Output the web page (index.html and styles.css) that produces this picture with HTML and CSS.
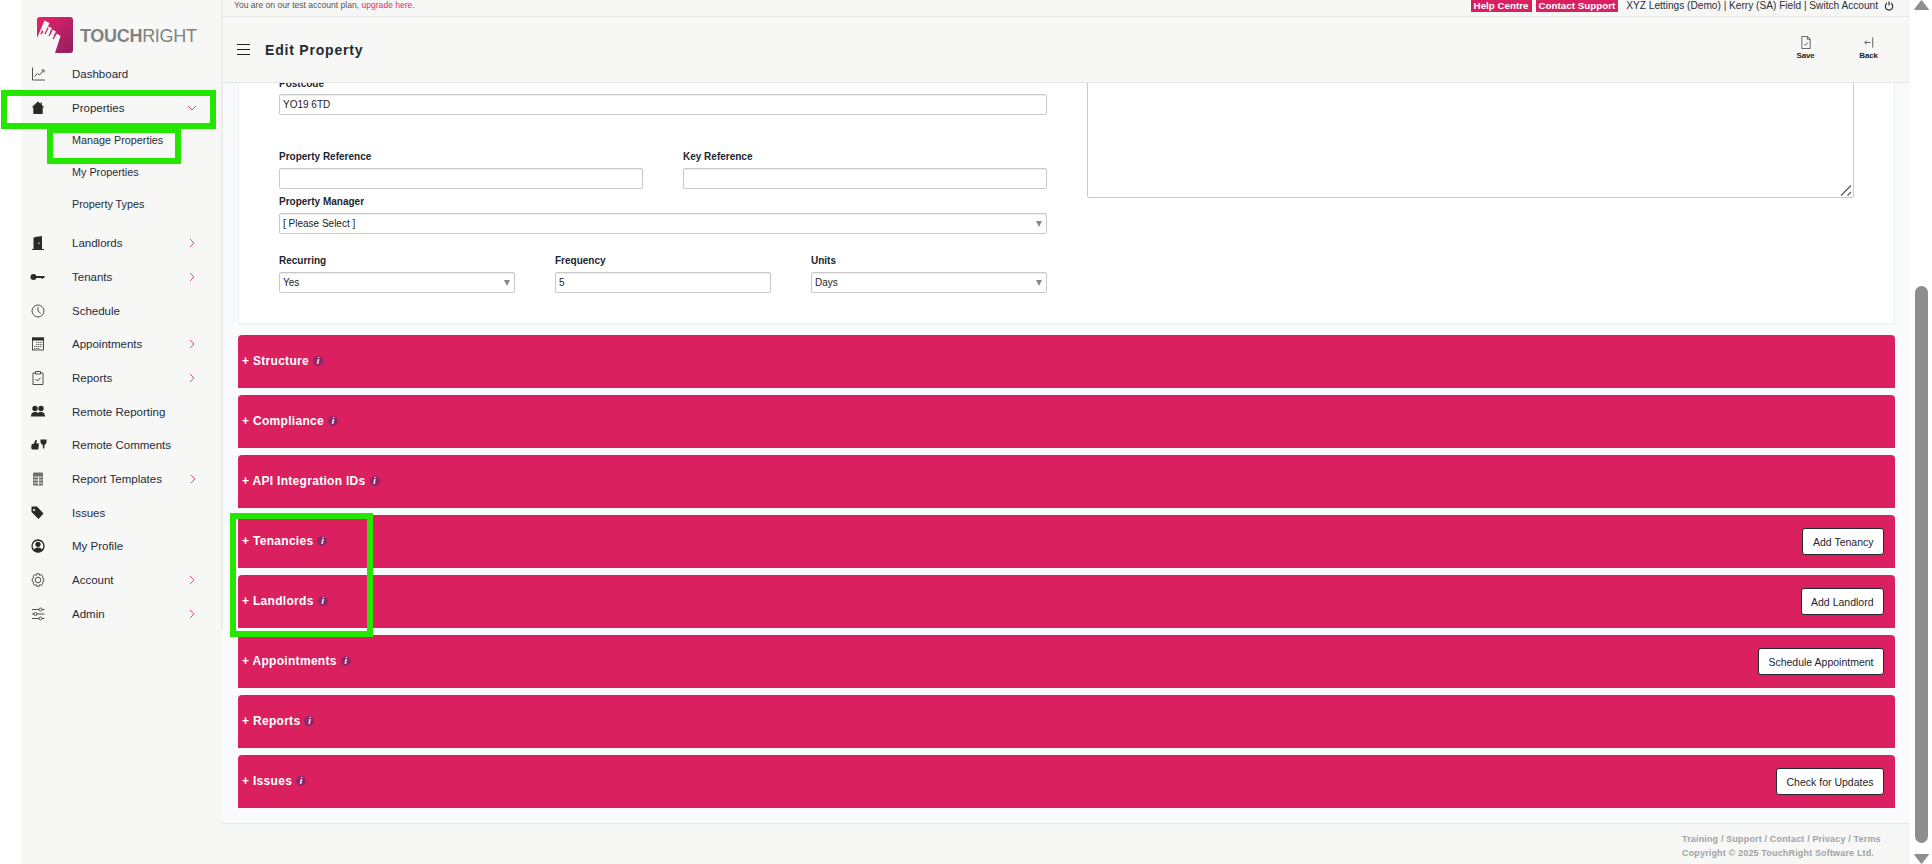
FILE: index.html
```html
<!DOCTYPE html>
<html lang="en">
<head>
<meta charset="utf-8">
<title>Edit Property</title>
<link rel="stylesheet" href="styles.css">
</head>
<body>
<div class="app">
  <div class="gutter"></div>
  <aside class="sidebar">
    <div class="side-inner">
      <div class="logo">
        <svg class="logo-mark" viewBox="0 0 36 36">
          <defs><linearGradient id="lg" x1="0" y1="0" x2="1" y2="1"><stop offset="0" stop-color="#ee2067"/><stop offset="1" stop-color="#8f1f5f"/></linearGradient></defs>
          <rect width="36" height="36" rx="3" fill="url(#lg)"/>
          <path fill="#f7f7f5" d="M0 21 L7.500 3.500 L12.500 6 L8.500 15 L11.500 9.500 L15 11 L12.500 16 L15.500 12.500 L19 14.500 L16.500 19 L20 16.500 L23.500 19 L18 36 L0 36 Z"/>
          <path fill="none" stroke="url(#lg)" stroke-width="1.300" d="M11 11 L8 17 M15 13 L12 19 M19.500 16 L16 22"/>
          <path fill="url(#lg)" d="M3 18 L5 13 L6.500 15 Z"/>
        </svg>
        <span class="logo-text"><b>TOUCH</b>RIGHT</span>
      </div>
      <nav class="nav">
        <a class="item"><svg class="ico" viewBox="0 0 16 14"><path class="ln" d="M2.500 .5V13H15M4.500 9.500L7.500 6.500 9.500 8 13.500 3.500M11.500 3H14V5.500"/></svg>Dashboard</a>
        <a class="item"><svg class="ico" viewBox="0 0 16 14"><path class="fl" d="M8 .5L3 5 2 6.500 3.300 6.500V13H12.700V6.500L14 6.500 13 5 11.800 3.900V1.500H10.500V2.700Z"/></svg>Properties<svg class="chev" viewBox="0 0 10 10"><path d="M1 3l4 4 4-4"/></svg></a>
        <div class="sub">
          <a class="sub-item">Manage Properties</a>
          <a class="sub-item">My Properties</a>
          <a class="sub-item">Property Types</a>
        </div>
        <a class="item"><svg class="ico" viewBox="0 0 16 14"><path class="fl" d="M3.500 2L5 1 12 0V13H14V14H2V13H3.500ZM8.500 6.500V8H9.500V6.500Z" fill-rule="evenodd"/></svg>Landlords<svg class="chev right" viewBox="0 0 10 10"><path d="M3 1l4 4-4 4"/></svg></a>
        <a class="item"><svg class="ico" viewBox="0 0 16 14"><circle class="fl" cx="3.500" cy="7" r="3"/><path class="fl" d="M5 6H14.500V8H13V8.800H11.500V8H5Z"/></svg>Tenants<svg class="chev right" viewBox="0 0 10 10"><path d="M3 1l4 4-4 4"/></svg></a>
        <a class="item"><svg class="ico" viewBox="0 0 16 14"><circle class="ln" cx="8" cy="7" r="6"/><path class="ln" d="M8 3V7L10.800 9.500"/></svg>Schedule</a>
        <a class="item"><svg class="ico" viewBox="0 0 16 14"><rect class="ln" x="2.500" y="1" width="11" height="12"/><rect class="fl" x="2" y=".5" width="12" height="3"/><path class="dots" d="M6 5.500H12.500M6 7.500H12.500M4 9.500H12.500M4 11.500H10"/></svg>Appointments<svg class="chev right" viewBox="0 0 10 10"><path d="M3 1l4 4-4 4"/></svg></a>
        <a class="item"><svg class="ico" viewBox="0 0 16 14"><path class="ln" d="M5.500 2H3V13.500H13V2H10.500M5.500 .5H10.500V3H5.500ZM5.500 8L7.500 10 10.500 6.500"/></svg>Reports<svg class="chev right" viewBox="0 0 10 10"><path d="M3 1l4 4-4 4"/></svg></a>
        <a class="item"><svg class="ico" viewBox="0 0 16 14"><circle class="fl" cx="5" cy="3.500" r="2.700"/><circle class="fl" cx="11" cy="3.500" r="2.700"/><path class="fl" d="M1 11.500C1 8 3 7 5 7S7.500 7.500 8 8C8.500 7.500 9 7 11 7S15 8 15 11.500Z"/></svg>Remote Reporting</a>
        <a class="item"><svg class="ico wide" viewBox="0 0 18 14"><path class="fl" d="M1.500 7C2 6 3 6 3.800 5.800L5.500 2H6.800L6.500 5.500H9L8.300 11.500H2.500C1.500 11.500 1 10 1.500 7Z"/><path class="fl" d="M10.500 1.500H16.500C17 4 16 6.500 14.500 6.800L14.300 10.500H13L12.700 6.800C11 6.500 10 4 10.500 1.500Z"/></svg>Remote Comments</a>
        <a class="item"><svg class="ico" viewBox="0 0 16 14"><rect class="grey" x="3" y=".5" width="10" height="13" rx="1"/><path class="cut" d="M3.500 5H12.500M3.500 8H12.500M3.500 11H12.500M8.500 5V13"/></svg>Report Templates<svg class="chev right" viewBox="0 0 10 10"><path d="M3 1l4 4-4 4"/></svg></a>
        <a class="item"><svg class="ico" viewBox="0 0 16 14"><path class="fl" d="M1.500 .5H7L13.500 7.500 8.500 13 1.500 6ZM4 3a1 1 0 1 0 .01 0Z" fill-rule="evenodd"/></svg>Issues</a>
        <a class="item"><svg class="ico" viewBox="0 0 16 14"><circle class="ln1" cx="8" cy="7" r="6"/><circle class="fl" cx="8" cy="5.300" r="2.600"/><path class="fl" d="M3.500 11.500C4 9.500 6 8.500 8 8.500S12 9.500 12.500 11.500C11 13 9 13.200 8 13.200S5 13 3.500 11.500Z"/></svg>My Profile</a>
        <a class="item"><svg class="ico" viewBox="0 0 16 14"><path class="ln" d="M6.800 .7H9.200L9.700 2.300 11.300 1.700 13 3.300 12.300 4.800 13.800 5.800V8.200L12.300 9.200 13 10.700 11.300 12.300 9.700 11.700 9.200 13.300H6.800L6.300 11.700 4.700 12.300 3 10.700 3.700 9.200 2.200 8.200V5.800L3.700 4.800 3 3.300 4.700 1.700 6.300 2.300Z"/><circle class="ln" cx="8" cy="7" r="2.800"/></svg>Account<svg class="chev right" viewBox="0 0 10 10"><path d="M3 1l4 4-4 4"/></svg></a>
        <a class="item"><svg class="ico" viewBox="0 0 16 14"><path class="ln" d="M2 2.500H9M12 2.500H14.500M2 7H4M7 7H14.500M2 11.500H9M12 11.500H14.500"/><circle class="ln" cx="10.500" cy="2.500" r="1.500"/><circle class="ln" cx="5.500" cy="7" r="1.500"/><circle class="ln" cx="10.500" cy="11.500" r="1.500"/></svg>Admin<svg class="chev right" viewBox="0 0 10 10"><path d="M3 1l4 4-4 4"/></svg></a>
      </nav>
    </div>
  </aside>

  <div class="main">
    <div class="strip">
      <p class="plan">You are on our test account plan, <a class="pink">upgrade here.</a></p>
      <div class="strip-right">
        <a class="badge">Help Centre</a>
        <a class="badge">Contact Support</a>
        <span class="account">XYZ Lettings (Demo) | Kerry (SA) Field | Switch Account</span>
        <svg class="power" viewBox="0 0 10 10"><path d="M3 2.300A3.700 3.700 0 1 0 7 2.300M5 .5V4.500"/></svg>
      </div>
    </div>
    <header class="header">
      <div class="burger"><span></span><span></span><span></span></div>
      <h1 class="title">Edit Property</h1>
      <div class="tools">
        <a class="tool"><svg class="tool-ico" viewBox="0 0 12 14"><path d="M1.500 .5H7.500L10.500 3.500V13.500H1.500ZM7.500 .5V3.500H10.500M4 8.500L5.500 10 8 7"/></svg>Save</a>
        <a class="tool"><svg class="tool-ico" viewBox="0 0 12 14"><path d="M10 1.500V12.500M1.500 7H7.500M3.500 5L1.500 7 3.500 9"/></svg>Back</a>
      </div>
    </header>
    <main class="content">
      <section class="card">
        <div class="form">
          <div class="col">
            <div class="field postcode">
              <label class="lbl">Postcode</label>
              <input class="ctl" value="YO19 6TD">
            </div>
            <div class="row refs">
              <div class="field"><label class="lbl">Property Reference</label><input class="ctl"></div>
              <div class="field"><label class="lbl">Key Reference</label><input class="ctl"></div>
            </div>
            <div class="field manager">
              <label class="lbl">Property Manager</label>
              <div class="sel"><select class="ctl pick"><option>[ Please Select ]</option></select></div>
            </div>
            <div class="recur">
              <div class="field"><label class="lbl">Recurring</label><div class="sel"><select class="ctl pick"><option>Yes</option></select></div></div>
              <div class="field"><label class="lbl">Frequency</label><input class="ctl" value="5"></div>
              <div class="field"><label class="lbl">Units</label><div class="sel"><select class="ctl pick"><option>Days</option></select></div></div>
            </div>
          </div>
          <div class="col">
            <div class="notes-wrap">
              <textarea class="notes"></textarea>
              <svg class="grip" viewBox="0 0 12 12"><path d="M1 11.500L11 1.500M7.500 11.500L11 8"/></svg>
            </div>
          </div>
        </div>
      </section>
      <div class="panels">
        <div class="panel"><span class="ptitle">+ Structure</span><i class="info">i</i></div>
        <div class="panel"><span class="ptitle">+ Compliance</span><i class="info">i</i></div>
        <div class="panel"><span class="ptitle">+ API Integration IDs</span><i class="info">i</i></div>
        <div class="panel"><span class="ptitle">+ Tenancies</span><i class="info">i</i><button class="btn">Add Tenancy</button></div>
        <div class="panel"><span class="ptitle">+ Landlords</span><i class="info">i</i><button class="btn">Add Landlord</button></div>
        <div class="panel"><span class="ptitle">+ Appointments</span><i class="info">i</i><button class="btn">Schedule Appointment</button></div>
        <div class="panel"><span class="ptitle">+ Reports</span><i class="info">i</i></div>
        <div class="panel"><span class="ptitle">+ Issues</span><i class="info">i</i><button class="btn">Check for Updates</button></div>
      </div>
    </main>
    <footer class="footer">
      <p>Training / Support / Contact / Privacy / Terms</p>
      <p>Copyright © 2025 TouchRight Software Ltd.</p>
    </footer>
  </div>

  <div class="scrollbar">
    <svg class="arrow" viewBox="0 0 15 10"><path d="M7.500 .5L14.500 9.500H.5Z"/></svg>
    <div class="thumb"></div>
    <svg class="arrow down" viewBox="0 0 15 10"><path d="M.5 .5H14.500L7.500 9.500Z"/></svg>
  </div>
</div>

<div class="mark mark-props"></div>
<div class="mark mark-manage"></div>
<div class="mark mark-panels"></div>
</body>
</html>
```

FILE: styles.css
```css
* { box-sizing: border-box; }
html, body { margin: 0; height: 864px; overflow: hidden; background: #fff; }
body { font-family: "Liberation Sans", Arial, sans-serif; color: #212529; position: relative; }
p, h1 { margin: 0; }
a { color: inherit; text-decoration: none; }

.app { display: flex; height: 864px; width: 1932px; }
.gutter { width: 21px; flex: none; background: #fff; }

/* sidebar */
.sidebar { width: 202px; flex: none; background: #f7f7f5; }
.side-inner { height: 630px; border-right: 2px solid #ececea; }
.logo { height: 57px; display: flex; padding: 17px 0 0 16px; gap: 7px; }
.logo-mark { width: 36px; height: 36px; flex: none; }
.logo-text { font: 400 18px/1 "Liberation Sans", sans-serif; color: #808285; margin-top: 10px; letter-spacing: -.3px; }
.logo-text b { font-weight: 700; }

.nav { display: flex; flex-direction: column; }
.item { height: 33.7px; display: flex; align-items: center; gap: 26px; padding: 0 24px 0 9px; font-size: 11.5px; color: #1f2b3a; white-space: nowrap; }
.ico { width: 16px; height: 14px; flex: none; overflow: visible; }
.ico .ln { fill: none; stroke: #3c3c3c; stroke-width: .9; }
.ico .ln1 { fill: none; stroke: #222; stroke-width: 1.3; }
.ico .fl { fill: #2a2a2a; }
.ico .dots { fill: none; stroke: #666; stroke-width: 1; stroke-dasharray: 1.400 .6; }
.ico .grey { fill: #6f6f6f; }
.ico .cut { fill: none; stroke: #f7f7f5; stroke-width: .9; }
.ico.wide { width: 18px; margin-right: -2px; }
.chev { width: 10px; height: 10px; margin-left: auto; flex: none; fill: none; stroke: #e84b80; stroke-width: 1; }
.sub { display: flex; flex-direction: column; margin: 0 0 6px; }
.sub-item { height: 32px; display: flex; align-items: center; padding-left: 51px; font-size: 10.8px; color: #1f2b3a; }

/* main */
.main { width: 1687px; flex: none; display: flex; flex-direction: column; height: 864px; background: #f9fafc; }
.strip { height: 17px; flex: none; background: #f7f7f5; border-bottom: 1px solid #e7e7e5; display: flex; justify-content: space-between; padding: 0 16px 0 11px; }
.plan { font-size: 8.55px; line-height: 11px; color: #555; }
.pink { color: #dc2f6d; }
.strip-right { display: flex; align-items: flex-start; }
.badge { background: #db2061; color: #fff; font-size: 9.8px; font-weight: 700; line-height: 12px; height: 12px; padding: 0 3px; margin-right: 4px; }
.account { font-size: 10.15px; line-height: 12px; margin-left: 4px; color: #26303c; }
.power { width: 10px; height: 10px; margin: 1px 0 0 6px; fill: none; stroke: #222; stroke-width: 1.100; }

.header { height: 66px; flex: none; background: #f7f7f5; border-bottom: 1px solid #e7e7e5; display: flex; align-items: center; padding: 0 32px 3px 14px; }
.burger { width: 13px; height: 11px; display: flex; flex-direction: column; justify-content: space-between; margin: 3px 15px 0 0; }
.burger span { display: block; height: 1px; background: #222; }
.title { font-size: 14px; font-weight: 700; letter-spacing: .8px; color: #222b33; flex: 1; margin-top: 3px; }
.tools { display: flex; gap: 44px; }
.tool { width: 19px; display: flex; flex-direction: column; align-items: center; font-size: 8px; font-weight: 700; line-height: 10px; letter-spacing: -.2px; white-space: nowrap; gap: 2px; }
.tool-ico { width: 12px; height: 13px; fill: none; stroke: #333; stroke-width: .8; }

.content { flex: 1; min-height: 0; overflow: hidden; padding: 0 15px 0 15px; }
.card { background: #fff; border: 1px solid #eceef0; border-top: 0; margin-top: -30px; height: 271px; padding: 25px 40px 0; }
.form { display: grid; grid-template-columns: 768px 767px; column-gap: 40px; }
.col { display: flex; flex-direction: column; }
.field { display: flex; flex-direction: column; flex: 1; min-width: 0; }
.lbl { font-size: 10px; font-weight: 700; line-height: 12px; margin-bottom: 5px; color: #1c2530; }
.postcode .lbl { margin-bottom: 4px; }
.ctl { width: 100%; height: 21px; border: 1px solid #c9c9c9; border-radius: 2px; background: #fff; box-shadow: inset 0 1px 1px rgba(0,0,0,.08); padding: 0 3px; font: 10px "Liberation Sans", sans-serif; color: #222; outline: 0; appearance: none; }
.pick { padding: 0 3px; }
.row { display: flex; }
.refs { gap: 40px; margin-top: 36px; }
.manager { margin-top: 7px; }
.recur { display: grid; grid-template-columns: 236px 216px 236px; column-gap: 40px; margin-top: 21px; }
.sel { position: relative; }
.sel::after { content: ""; position: absolute; right: 5px; top: 8px; border: 3.500px solid transparent; border-top: 6px solid #888; border-bottom: 0; }
.notes-wrap { position: relative; }
.notes { display: block; width: 767px; height: 120px; margin: 0; border: 1px solid #c9c9c9; border-radius: 2px; resize: none; outline: 0; background: #fff; }
.grip { position: absolute; right: 2px; bottom: 2px; width: 12px; height: 12px; fill: none; stroke: #555; stroke-width: 1.200; }

.panels { display: flex; flex-direction: column; gap: 7px; margin-top: 11px; }
.panel { height: 53px; background: #da205e; border-radius: 4px 4px 0 0; display: flex; align-items: center; padding: 0 11px 0 4px; }
.ptitle { color: #fff; font-size: 12px; font-weight: 700; letter-spacing: .3px; white-space: pre; margin-bottom: 2px; }
.info { width: 10px; height: 10px; border-radius: 50%; background: #8a2869; color: #fff; font: italic 700 9px/10px "Liberation Sans", sans-serif; text-align: center; margin: 0 0 1px 4px; }
.btn { margin-left: auto; height: 27px; padding: 0 9.500px; background: #fff; border: 1px solid #222b33; border-radius: 3px; font: 10.500px "Liberation Sans", sans-serif; color: #1c2530; }

.footer { height: 41px; flex: none; background: #f7f7f5; border-top: 1px solid #e7e7e5; padding: 8px 0 0 1459px; font-size: 9px; font-weight: 700; line-height: 14px; color: #a0a3a6; letter-spacing: .16px; white-space: nowrap; }

/* scrollbar */
.scrollbar { width: 22px; flex: none; background: #fff; display: flex; flex-direction: column; align-items: center; height: 864px; padding-left: 1px; }
.arrow { width: 15px; height: 10px; fill: #8e8e8e; stroke: #8e8e8e; stroke-linejoin: round; flex: none; }
.arrow.down { margin-top: 11px; }
.thumb { width: 13px; height: 557px; margin-top: 276px; border-radius: 7px; background: #8e8e8e; flex: none; }

/* annotation rectangles drawn over the screenshot */
.mark { position: absolute; border: 6px solid #25e600; pointer-events: none; }
.mark-props { left: 1px; top: 90px; width: 215px; height: 39px; }
.mark-manage { left: 47px; top: 127px; width: 134px; height: 37px; }
.mark-panels { left: 230px; top: 513px; width: 143px; height: 124px; }
```
